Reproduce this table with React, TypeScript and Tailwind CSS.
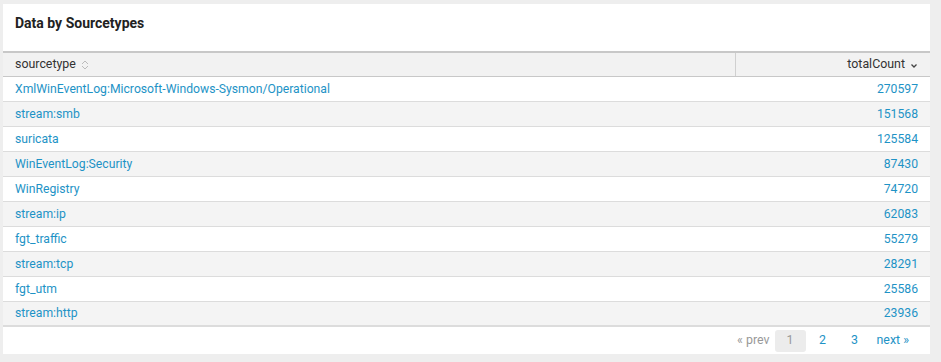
import React from "react";

const rows: [string, string][] = [
  ["XmlWinEventLog:Microsoft-Windows-Sysmon/Operational", "270597"],
  ["stream:smb", "151568"],
  ["suricata", "125584"],
  ["WinEventLog:Security", "87430"],
  ["WinRegistry", "74720"],
  ["stream:ip", "62083"],
  ["fgt_traffic", "55279"],
  ["stream:tcp", "28291"],
  ["fgt_utm", "25586"],
  ["stream:http", "23936"],
];

export default function App() {
  return (
    <div
      className="w-[941px] h-[362px] bg-[#eeeeee] pt-[4px] pl-[3px]"
      style={{ fontFamily: "Roboto, 'Helvetica Neue', Arial, sans-serif" }}
    >
      <div className="w-[927px] h-[350px] bg-white flex flex-col">
        <div className="h-[47px] pl-[12px] pt-[9px] text-[14px] font-bold text-[#222]">
          Data by Sourcetypes
        </div>
        <div className="flex h-[26px] border-t-2 border-b border-[#c8c8c8] bg-[#f2f2f2] text-[12.4px] text-[#333]">
          <div className="w-[733px] flex items-center pl-[12px] border-r border-[#d0d0d0]">
            sourcetype
            <svg width="8" height="10" viewBox="0 0 8 10" className="ml-[5px]">
              <path d="M1 4 L4 1 L7 4" fill="none" stroke="#bbb" strokeWidth="1" />
              <path d="M1 6 L4 9 L7 6" fill="none" stroke="#bbb" strokeWidth="1" />
            </svg>
          </div>
          <div className="flex-1 flex items-center justify-end pr-[12px]">
            totalCount
            <svg width="8" height="6" viewBox="0 0 8 6" className="ml-[5px] mt-[3px]">
              <path d="M1.5 1.5 L4 4 L6.5 1.5" fill="none" stroke="#444" strokeWidth="1.3" />
            </svg>
          </div>
        </div>
        {rows.map(([name, count], i) => (
          <div
            key={name}
            className={`flex h-[25px] items-center text-[12.2px] text-[#1e93c6] border-b border-[#dcdcdc] ${
              i % 2 === 1 ? "bg-[#f4f4f4]" : "bg-white"
            } ${i === rows.length - 1 ? "border-b-2 border-[#cfcfcf]" : ""}`}
          >
            <div className="flex-1 pl-[12px]">{name}</div>
            <div className="pr-[12px]">{count}</div>
          </div>
        ))}
        <div className="flex justify-end items-center h-[27px] pr-[21px] text-[12.4px]">
          <span className="text-[#999] mr-[5px]">« prev</span>
          <span className="w-[31px] h-[22px] rounded-[3px] bg-[#ececec] text-[#999] flex items-center justify-center">
            1
          </span>
          <span className="text-[#1e93c6] ml-[7px] w-[20px] text-center">2</span>
          <span className="text-[#1e93c6] ml-[12px] w-[20px] text-center">3</span>
          <span className="text-[#1e93c6] ml-[12px]">next »</span>
        </div>
      </div>
    </div>
  );
}
